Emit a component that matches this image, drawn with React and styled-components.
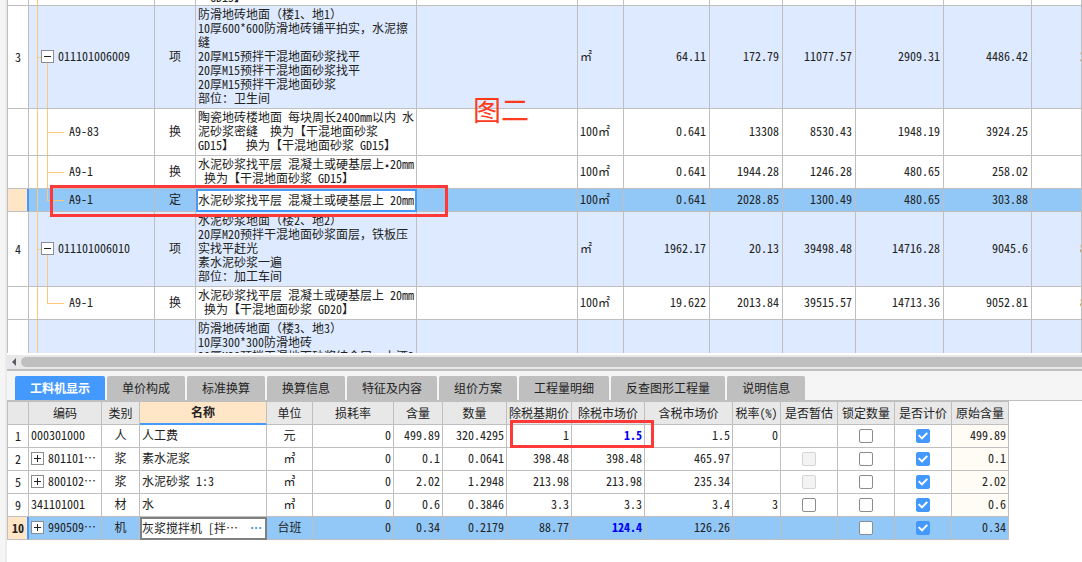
import React, { useCallback, useState } from 'react'
import styled, { createGlobalStyle, css } from 'styled-components'

const GlobalStyle = createGlobalStyle`
  * {
    box-sizing: border-box;
  }

  body {
    margin: 0;
    background: #fff;
    color: #222;
    font: 12px/14px 'Noto Sans Mono CJK SC', 'Liberation Mono', 'Noto Sans CJK SC', monospace;
  }

  button,
  input {
    margin: 0;
    padding: 0;
    border: 0;
    color: inherit;
    font: inherit;
  }
`

const line = '#bfbfbf'
const blue = '#4499ff'
const selected = '#92c8f8'
const marked = '#ffe6c7'
const tree = '#ffc878'

const Page = styled.main`
  display: flex;
  flex-direction: column;
  height: 100vh;
  border-left: 5px solid #f5f5f5;
  box-shadow: inset 2px 0 #ebebeb;
  padding-left: 2px;
`

const BillPane = styled.section`
  position: relative;
  flex: 1 1 0;
  min-height: 0;
  overflow: hidden;
`

const Table = styled.table`
  border-spacing: 0;
  table-layout: fixed;
  border-left: 1px solid ${line};
`

const BillTable = styled(Table)`
  width: 100%;
`

const Cell = styled.td`
  height: 23px;
  padding: ${(props) => props.$pad || '0 2px 2px'};
  border-right: 1px solid ${line};
  border-bottom: 1px solid ${line};
  text-align: ${(props) => props.$align || 'left'};
  vertical-align: ${(props) => props.$valign || 'middle'};
  white-space: pre;
  overflow: hidden;
  ${(props) => props.$bold && 'color: #0000f0; font-weight: bold;'}
`

const BillRow = styled.tr`
  height: ${(props) => props.$height || 'auto'};
  background: ${(props) => props.$bg || '#fff'};
`

const NumberCell = styled(Cell)`
  padding: 0;
  text-align: center;
  background: #fff;
  ${(props) =>
    props.$current &&
    css`
      background: ${marked};
      box-shadow: inset -1px 0 ${blue};
      border-right-color: ${blue};
      font-weight: ${props.$strong ? 'bold' : 'normal'};
    `}
`

const trunk = `linear-gradient(${tree}, ${tree}) 8px 0 / 1px 100% no-repeat`

const trees = {
  none: trunk,
  parent: `${trunk},
    linear-gradient(${tree}, ${tree}) 8px 50% / 6px 1px no-repeat,
    linear-gradient(${tree}, ${tree}) 18px 100% / 1px 50% no-repeat`,
  child: `${trunk},
    linear-gradient(${tree}, ${tree}) 18px 0 / 1px 100% no-repeat,
    linear-gradient(${tree}, ${tree}) 18px 50% / 17px 1px no-repeat`,
  last: `${trunk},
    linear-gradient(${tree}, ${tree}) 18px 0 / 1px 50% no-repeat,
    linear-gradient(${tree}, ${tree}) 18px 50% / 17px 1px no-repeat`,
}

const TreeCell = styled(Cell)`
  padding: 0 0 2px ${(props) => (props.$kind === 'parent' ? 12 : 40)}px;
  background: ${(props) => trees[props.$kind]};
`

const NodeLine = styled.div`
  display: flex;
  align-items: center;
  gap: 4px;
`

const Expander = styled.button`
  display: grid;
  place-items: center;
  width: 13px;
  height: 13px;
  border: 1px solid #8c8c8c;
  background: #fff;
`

const Clip = styled.div`
  display: flex;
  align-items: flex-end;
  height: 5px;
  padding-bottom: 1px;
  overflow: hidden;
`

const Dot = styled.span`
  font: 10px/0 'Liberation Mono', monospace;
`

const NameEdit = styled.input`
  display: block;
  width: 100%;
  height: 23px;
  padding-bottom: 2px;
  border: 2px solid ${blue};
  background: #fff;
  outline: 0;
`

const EditCell = styled(Cell)`
  padding: 0;
  border-bottom: 0;
  border-right: 0;
`

const MarkBox = styled.div`
  position: absolute;
  top: ${(props) => props.$top}px;
  left: ${(props) => props.$left}px;
  width: ${(props) => props.$width}px;
  height: ${(props) => props.$height}px;
  border: 3px solid #ff3838;
  pointer-events: none;
`

const MarkText = styled.div`
  position: absolute;
  top: 94px;
  left: 466px;
  color: #ff3a1c;
  font: 28px/30px 'Noto Sans CJK SC', sans-serif;
`

const ScrollBar = styled.div`
  display: flex;
  align-items: center;
  gap: 5px;
  margin-top: 2px;
  padding: 2px 0 2px 5px;
  background: #e8e8e8;
`

const Arrow = styled.svg`
  width: 4px;
  height: 8px;
  fill: #5c5c66;
`

const Thumb = styled.div`
  flex: 1;
  height: 10px;
  border-radius: 5px 0 0 5px;
  background: ${line};
`

const DetailPane = styled.section`
  border-top: 2px solid ${line};
  padding-bottom: 22px;
`

const Tabs = styled.nav`
  display: flex;
  gap: 2px;
  padding: 5px 8px 0;
  border-bottom: 1px solid ${line};
  background: #f5f5f5;
`

const Tab = styled.button`
  height: 24px;
  padding: 0 15px;
  border-radius: 2px 2px 0 0;
  background: ${(props) => (props.$active ? blue : line)};
  ${(props) => props.$active && 'color: #fff; font-weight: bold;'}
`

const DetailBody = styled.div`
  position: relative;
`

const DetailTable = styled(Table)`
  width: 1002px;
  border-top: 1px solid ${line};
`

const HeadCell = styled.th`
  height: 23px;
  padding: 0;
  border-right: 1px solid ${line};
  border-bottom: 1px solid ${line};
  background: #e8e8e8;
  font-weight: normal;
  white-space: nowrap;
  ${(props) =>
    props.$current &&
    css`
      padding-bottom: 2px;
      background: ${marked};
      border-bottom-color: ${blue};
      box-shadow: inset 0 -1px ${blue};
      font-weight: bold;
    `}
`

const NameBox = styled.div`
  display: flex;
  height: 23px;
  padding-bottom: 1px;
  border: 2px solid #808080;
  background: #fff;

  & > input {
    flex: 1;
    min-width: 0;
    outline: 0;
  }

  & > button {
    width: 18px;
    background: none;
    color: #3d8fd6;
    font-weight: bold;
  }
`

const Tick = styled.input`
  display: grid;
  place-items: center;
  width: 14px;
  height: 14px;
  margin: 0 auto;
  border: 1px solid #8c8c8c;
  border-radius: 2px;
  background: #fff;
  appearance: none;

  &:disabled {
    border-color: #d4d4d4;
    background: #f3f3f3;
  }

  &:checked {
    border-color: ${blue};
    background: ${blue};
  }

  &:checked::before {
    content: '';
    width: 10px;
    height: 8px;
    background: #fff;
    clip-path: polygon(0 48%, 14% 32%, 38% 62%, 86% 4%, 100% 20%, 40% 98%);
  }
`

const billCols = [21, 126, 41, 221, 161, 46, 86, 73, 73, 88, 88]

const bills = [
  {
    no: '3',
    kind: 'parent',
    code: '011101006009',
    type: '项',
    name: '防滑地砖地面（楼1、地1）\n10厚600*600防滑地砖铺平拍实，水泥擦\n缝\n20厚M15预拌干混地面砂浆找平\n20厚M15预拌干混地面砂浆找平\n20厚M15预拌干混地面砂浆\n部位：卫生间',
    unit: '㎡',
    values: ['64.11', '172.79', '11077.57', '2909.31', '4486.42'],
    more: '2',
  },
  {
    kind: 'child',
    code: 'A9-83',
    type: '换',
    name: '陶瓷地砖楼地面 每块周长2400mm以内 水\n泥砂浆密缝  换为【干混地面砂浆\nGD15】  换为【干混地面砂浆 GD15】',
    unit: '100㎡',
    values: ['0.641', '13308', '8530.43', '1948.19', '3924.25'],
  },
  {
    kind: 'child',
    code: 'A9-1',
    type: '换',
    name: (
      <>
        水泥砂浆找平层 混凝土或硬基层上<Dot>▪</Dot>
        {'20mm\n 换为【干混地面砂浆 GD15】'}
      </>
    ),
    unit: '100㎡',
    values: ['0.641', '1944.28', '1246.28', '480.65', '258.02'],
  },
  {
    kind: 'last',
    code: 'A9-1',
    type: '定',
    name: '水泥砂浆找平层 混凝土或硬基层上 20mm',
    unit: '100㎡',
    values: ['0.641', '2028.85', '1300.49', '480.65', '303.88'],
    current: true,
  },
  {
    no: '4',
    kind: 'parent',
    code: '011101006010',
    type: '项',
    name: '水泥砂浆地面（楼2、地2）\n20厚M20预拌干混地面砂浆面层，铁板压\n实找平赶光\n素水泥砂浆一遍\n部位：加工车间',
    unit: '㎡',
    values: ['1962.17', '20.13', '39498.48', '14716.28', '9045.6'],
    more: '8',
  },
  {
    kind: 'last',
    code: 'A9-1',
    type: '换',
    name: '水泥砂浆找平层 混凝土或硬基层上 20mm\n 换为【干混地面砂浆 GD20】',
    unit: '100㎡',
    values: ['19.622', '2013.84', '39515.57', '14713.36', '9052.81'],
    more: '8',
  },
]

const tabs = [
  '工料机显示',
  '单价构成',
  '标准换算',
  '换算信息',
  '特征及内容',
  '组价方案',
  '工程量明细',
  '反查图形工程量',
  '说明信息',
]

const detailCols = [
  ['', 21],
  ['编码', 73],
  ['类别', 38],
  ['名称', 127],
  ['单位', 46],
  ['损耗率', 81],
  ['含量', 49],
  ['数量', 64],
  ['除税基期价', 65],
  ['除税市场价', 73],
  ['含税市场价', 88],
  ['税率(%)', 48],
  ['是否暂估', 57],
  ['锁定数量', 57],
  ['是否计价', 57],
  ['原始含量', 57],
]

// values: loss, content, quantity, base price, market price, taxed price, rate
const details = [
  {
    no: '1',
    code: '000301000',
    type: '人',
    name: '人工费',
    unit: '元',
    values: ['0', '499.89', '320.4295', '1', '1.5', '1.5', '0'],
    bold: true,
    origin: '499.89',
  },
  {
    no: '2',
    code: '801101…',
    group: true,
    type: '浆',
    name: '素水泥浆',
    unit: '㎥',
    values: ['0', '0.1', '0.0641', '398.48', '398.48', '465.97', ''],
    estimate: 'disabled',
    origin: '0.1',
  },
  {
    no: '5',
    code: '800102…',
    group: true,
    type: '浆',
    name: '水泥砂浆 1:3',
    unit: '㎥',
    values: ['0', '2.02', '1.2948', '213.98', '213.98', '235.34', ''],
    estimate: 'disabled',
    origin: '2.02',
  },
  {
    no: '9',
    code: '341101001',
    type: '材',
    name: '水',
    unit: '㎥',
    values: ['0', '0.6', '0.3846', '3.3', '3.3', '3.4', '3'],
    estimate: 'enabled',
    origin: '0.6',
  },
  {
    no: '10',
    code: '990509…',
    group: true,
    type: '机',
    name: '灰浆搅拌机 [拌…',
    unit: '台班',
    values: ['0', '0.34', '0.2179', '88.77', '124.4', '126.26', ''],
    bold: true,
    origin: '0.34',
    current: true,
  },
]

const Sign = ({ plus }) => (
  <svg width="11" height="11" stroke="#222" shapeRendering="crispEdges">
    <path d={plus ? 'M2 5.5h7M5.5 2v7' : 'M2 5.5h7'} />
  </svg>
)

const rowColor = (row) => {
  if (row.current) return selected
  return row.kind === 'parent' ? '#deeaff' : '#fff'
}

const BillLine = ({ row }) => (
  <BillRow $bg={rowColor(row)}>
    <NumberCell $current={row.current}>{row.no}</NumberCell>
    <TreeCell $kind={row.kind}>
      {row.kind === 'parent' ? (
        <NodeLine>
          <Expander aria-label={row.code}>
            <Sign />
          </Expander>
          {row.code}
        </NodeLine>
      ) : (
        row.code
      )}
    </TreeCell>
    <Cell $align="center">{row.type}</Cell>
    {row.current ? (
      <EditCell>
        <NameEdit aria-label={row.code} defaultValue={row.name} />
      </EditCell>
    ) : (
      <Cell $pad="1px 0 3px 2px">{row.name}</Cell>
    )}
    <Cell />
    <Cell>{row.unit}</Cell>
    {row.values.map((value, i) => (
      <Cell key={i} $align="right" $pad="0 3px 2px">
        {value}
      </Cell>
    ))}
    <Cell $pad="0 0 2px 48px">{row.more}</Cell>
  </BillRow>
)

const OriginCell = styled(Cell)`
  background: ${(props) => (props.$current ? selected : '#fffbf5')};
`

const DetailLine = ({ row }) => (
  <BillRow $bg={row.current && selected}>
    <NumberCell $current={row.current} $strong>
      {row.no}
    </NumberCell>
    <Cell>
      {row.group ? (
        <NodeLine>
          <Expander aria-label={row.code}>
            <Sign plus />
          </Expander>
          {row.code}
        </NodeLine>
      ) : (
        row.code
      )}
    </Cell>
    <Cell $align="center">{row.type}</Cell>
    {row.current ? (
      <EditCell>
        <NameBox>
          <input aria-label="名称" defaultValue={row.name} />
          <button>…</button>
        </NameBox>
      </EditCell>
    ) : (
      <Cell>{row.name}</Cell>
    )}
    <Cell $align="center">{row.unit}</Cell>
    {row.values.map((value, i) => (
      <Cell key={i} $align="right" $bold={row.bold && i === 4}>
        {value}
      </Cell>
    ))}
    <Cell $pad="0">
      {row.estimate && (
        <Tick
          type="checkbox"
          aria-label="是否暂估"
          disabled={row.estimate === 'disabled'}
        />
      )}
    </Cell>
    <Cell $pad="0">
      <Tick type="checkbox" aria-label="锁定数量" />
    </Cell>
    <Cell $pad="0">
      <Tick type="checkbox" aria-label="是否计价" defaultChecked />
    </Cell>
    <OriginCell $align="right" $current={row.current}>
      {row.origin}
    </OriginCell>
  </BillRow>
)

const EdgeCell = styled(Cell)`
  height: 6px;
  padding: 0 2px;
`

const EdgeTree = styled(TreeCell)`
  height: 6px;
  padding: 0;
`

const EdgeRow = () => (
  <BillRow>
    <EdgeCell />
    <EdgeTree $kind="none" />
    <EdgeCell />
    <EdgeCell>
      <Clip>{'  GD15】'}</Clip>
    </EdgeCell>
    {[...Array(8)].map((_, i) => (
      <EdgeCell key={i} />
    ))}
  </BillRow>
)

const App = () => {
  const [tab, setTab] = useState(0)
  const openTab = useCallback((idx) => () => setTab(idx), [])

  return (
    <>
      <GlobalStyle />
      <Page>
        <BillPane>
          <BillTable>
            <colgroup>
              {billCols.map((width, i) => (
                <col key={i} width={width} />
              ))}
              <col />
            </colgroup>
            <tbody>
              <EdgeRow />
              {bills.map((row, i) => (
                <BillLine key={i} row={row} />
              ))}
              <BillRow $bg="#deeaff" $height="90px">
                <NumberCell />
                <TreeCell $kind="none" />
                <Cell />
                <Cell $pad="1px 0 3px 2px" $valign="top">
                  {
                    '防滑地砖地面（楼3、地3）\n10厚300*300防滑地砖\n20厚M20预拌干混地面砂浆结合层，上洒2'
                  }
                </Cell>
                {[...Array(8)].map((_, i) => (
                  <Cell key={i} />
                ))}
              </BillRow>
            </tbody>
          </BillTable>
          <MarkText>图二</MarkText>
          <MarkBox $top={185} $left={43} $width={398} $height={32} />
        </BillPane>
        <ScrollBar>
          <Arrow viewBox="0 0 4 8">
            <path d="M4 0v8L0 4z" />
          </Arrow>
          <Thumb />
        </ScrollBar>
        <DetailPane>
          <Tabs>
            {tabs.map((label, i) => (
              <Tab key={label} $active={tab === i} onClick={openTab(i)}>
                {label}
              </Tab>
            ))}
          </Tabs>
          <DetailBody>
            <DetailTable>
              <colgroup>
                {detailCols.map(([label, width]) => (
                  <col key={label} width={width} />
                ))}
              </colgroup>
              <thead>
                <tr>
                  {detailCols.map(([label]) => (
                    <HeadCell key={label} $current={label === '名称'}>
                      {label}
                    </HeadCell>
                  ))}
                </tr>
              </thead>
              <tbody>
                {details.map((row) => (
                  <DetailLine key={row.no} row={row} />
                ))}
              </tbody>
            </DetailTable>
            <MarkBox $top={19} $left={503} $width={144} $height={28} />
          </DetailBody>
        </DetailPane>
      </Page>
    </>
  )
}

export default App
